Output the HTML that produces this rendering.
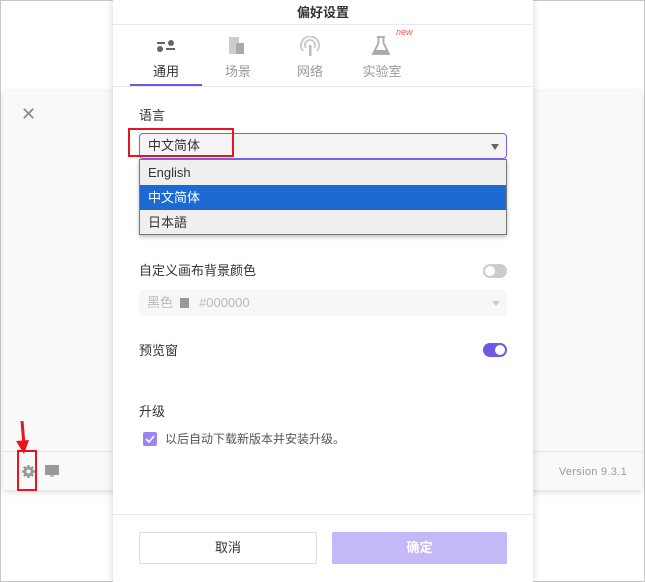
<!DOCTYPE html>
<html><head><meta charset="utf-8"><style>
*{margin:0;padding:0;box-sizing:border-box}
body{width:645px;height:582px;position:relative;overflow:hidden;background:#fff;font-family:"Liberation Sans","Noto Sans CJK SC",sans-serif;font-size:13px;color:#333;line-height:16px}
.frame{position:absolute;inset:0;border:1px solid #c8c8c8}
.back{position:absolute;left:3px;top:91px;width:639px;height:399px;background:#f9f9f9;box-shadow:0 2px 6px rgba(0,0,0,.15)}
.backfoot{position:absolute;left:0;right:0;top:360px;border-top:1px solid #e6e6e6;height:39px}
.modal{position:absolute;left:113px;top:0;width:420px;height:582px;background:#fff;box-shadow:0 0 8px rgba(0,0,0,.18)}
.abs{position:absolute}
.tab{position:absolute;top:64px;font-size:13px;color:#999;width:60px;text-align:center}
</style></head><body>
<div class="frame"></div>
<div class="back">
 <div class="abs" style="left:18px;top:14px;color:#888;font-size:18px;line-height:18px">✕</div>
 <div class="backfoot">
  <svg class="abs" style="left:19px;top:13px" width="13" height="13" viewBox="0 0 16 16"><circle cx="8" cy="8" r="6" fill="#999"/><g stroke="#999" stroke-width="3"><path d="M8 0v16M0 8h16M2.3 2.3l11.4 11.4M13.7 2.3L2.3 13.7"/></g><circle cx="8" cy="8" r="2.5" fill="#f9f9f9"/></svg>
  <div class="abs" style="left:42px;top:13px;width:14px;height:10px;background:#999"></div>
  <div class="abs" style="left:47px;top:23px;width:4px;height:2px;background:#bbb"></div>
  <div class="abs" style="right:15px;top:12px;font-size:11px;color:#999;letter-spacing:.3px">Version 9.3.1</div>
 </div>
</div>
<div class="abs" style="left:17px;top:450px;width:20px;height:41px;border:2px solid #e8141f"></div>
<svg class="abs" style="left:12px;top:421px" width="20" height="34" viewBox="0 0 20 34"><path d="M10 0 L12 24" stroke="#e8141f" stroke-width="3"/><path d="M4 20 L12 33 L17 19 Z" fill="#e8141f"/></svg>
<div class="modal">
 <div class="abs" style="left:0;right:0;top:0;height:25px;border-bottom:1px solid #e8e8e8;text-align:center;line-height:25px;font-weight:bold;font-size:13px;color:#333">偏好设置</div>
 <svg class="abs" style="left:44px;top:39px" width="18" height="14" viewBox="0 0 18 14"><rect x="0" y="3" width="8" height="2" fill="#666"/><circle cx="14" cy="4" r="3" fill="#666"/><circle cx="3" cy="10" r="3" fill="#666"/><rect x="9" y="9" width="9" height="2" fill="#666"/></svg>
 <svg class="abs" style="left:116px;top:37px" width="16" height="18"><rect x="0" y="0" width="10" height="17" fill="#ccc"/><rect x="7" y="6" width="8" height="11" fill="#aaa"/></svg>
 <svg class="abs" style="left:186px;top:36px" width="22" height="20" viewBox="0 0 22 20"><path d="M4 15 A9 9 0 1 1 18 15" fill="none" stroke="#ccc" stroke-width="2"/><path d="M7 12 A5 5 0 1 1 15 12" fill="none" stroke="#ccc" stroke-width="2"/><rect x="10" y="9" width="2.5" height="11" fill="#bbb"/></svg>
 <svg class="abs" style="left:258px;top:36px" width="20" height="20" viewBox="0 0 20 20"><path d="M6 1h8M7.5 1v6L2 18h16L12.5 7V1" fill="none" stroke="#aaa" stroke-width="1.8"/><path d="M4 14h12l2 4H2z" fill="#aaa"/></svg>
 <div class="abs" style="left:283px;top:27px;font-size:9px;font-style:italic;color:#e55;line-height:10px">new</div>
 <div class="tab" style="left:23px;color:#333">通用</div>
 <div class="tab" style="left:95px">场景</div>
 <div class="tab" style="left:167px">网络</div>
 <div class="tab" style="left:239px">实验室</div>
 <div class="abs" style="left:0;right:0;top:86px;border-top:1px solid #e8e8e8"></div>
 <div class="abs" style="left:17px;top:84px;width:72px;height:2px;background:#7256e8"></div>
 <div class="abs" style="left:26px;top:108px">语言</div>
 <div class="abs" style="left:26px;top:133px;width:368px;height:26px;border:1px solid #7d62ea;border-radius:4px;background:#f4f4f4;box-shadow:0 1px 2px rgba(0,0,0,.1)"><span class="abs" style="left:8px;top:0;line-height:24px">中文简体</span><span class="abs" style="right:7px;top:10px;width:0;height:0;border-left:4px solid transparent;border-right:4px solid transparent;border-top:6px solid #666"></span></div>
 <div class="abs" style="left:15px;top:128px;width:106px;height:29px;border:2px solid #e8141f"></div>
 <div class="abs" style="left:26px;top:159px;width:368px;height:76px;border:1px solid #777;background:#efefef;box-shadow:0 2px 4px rgba(0,0,0,.25)">
  <div style="height:25px;line-height:25px;padding-left:8px">English</div>
  <div style="height:25px;line-height:25px;padding-left:8px;background:#1c69d4;color:#fff">中文简体</div>
  <div style="height:25px;line-height:25px;padding-left:8px">日本語</div>
 </div>
 <div class="abs" style="left:26px;top:263px">自定义画布背景颜色</div>
 <div class="abs" style="left:370px;top:264px;width:24px;height:14px;border-radius:7px;background:#ccc"><div class="abs" style="left:2px;top:2px;width:10px;height:10px;border-radius:50%;background:#fff"></div></div>
 <div class="abs" style="left:26px;top:290px;width:368px;height:26px;border-radius:4px;background:#f7f7f7;color:#bbb"><span class="abs" style="left:8px;top:0;line-height:26px">黑色</span><span class="abs" style="left:41px;top:8px;width:9px;height:10px;background:#999"></span><span class="abs" style="left:60px;top:0;line-height:26px">#000000</span><span class="abs" style="right:7px;top:11px;border-left:4px solid transparent;border-right:4px solid transparent;border-top:5px solid #ccc"></span></div>
 <div class="abs" style="left:26px;top:343px">预览窗</div>
 <div class="abs" style="left:370px;top:343px;width:24px;height:14px;border-radius:7px;background:#7256e8"><div class="abs" style="left:12px;top:2px;width:10px;height:10px;border-radius:50%;background:#fff"></div></div>
 <div class="abs" style="left:26px;top:404px">升级</div>
 <div class="abs" style="left:30px;top:432px;width:14px;height:14px;border-radius:2px;background:#9a86ee"><svg width="14" height="14"><path d="M3 7l3 3 5-6" fill="none" stroke="#fff" stroke-width="1.6"/></svg></div>
 <div class="abs" style="left:52px;top:431px;font-size:12px;color:#555">以后自动下载新版本并安装升级。</div>
 <div class="abs" style="left:0;right:0;top:514px;border-top:1px solid #e8e8e8"></div>
 <div class="abs" style="left:26px;top:532px;width:178px;height:32px;border:1px solid #ddd;border-radius:2px;text-align:center;line-height:30px;color:#333">取消</div>
 <div class="abs" style="left:219px;top:532px;width:175px;height:32px;border-radius:2px;background:#c5b8f6;text-align:center;line-height:32px;color:#fff;font-weight:bold">确定</div>
</div>
</body></html>
